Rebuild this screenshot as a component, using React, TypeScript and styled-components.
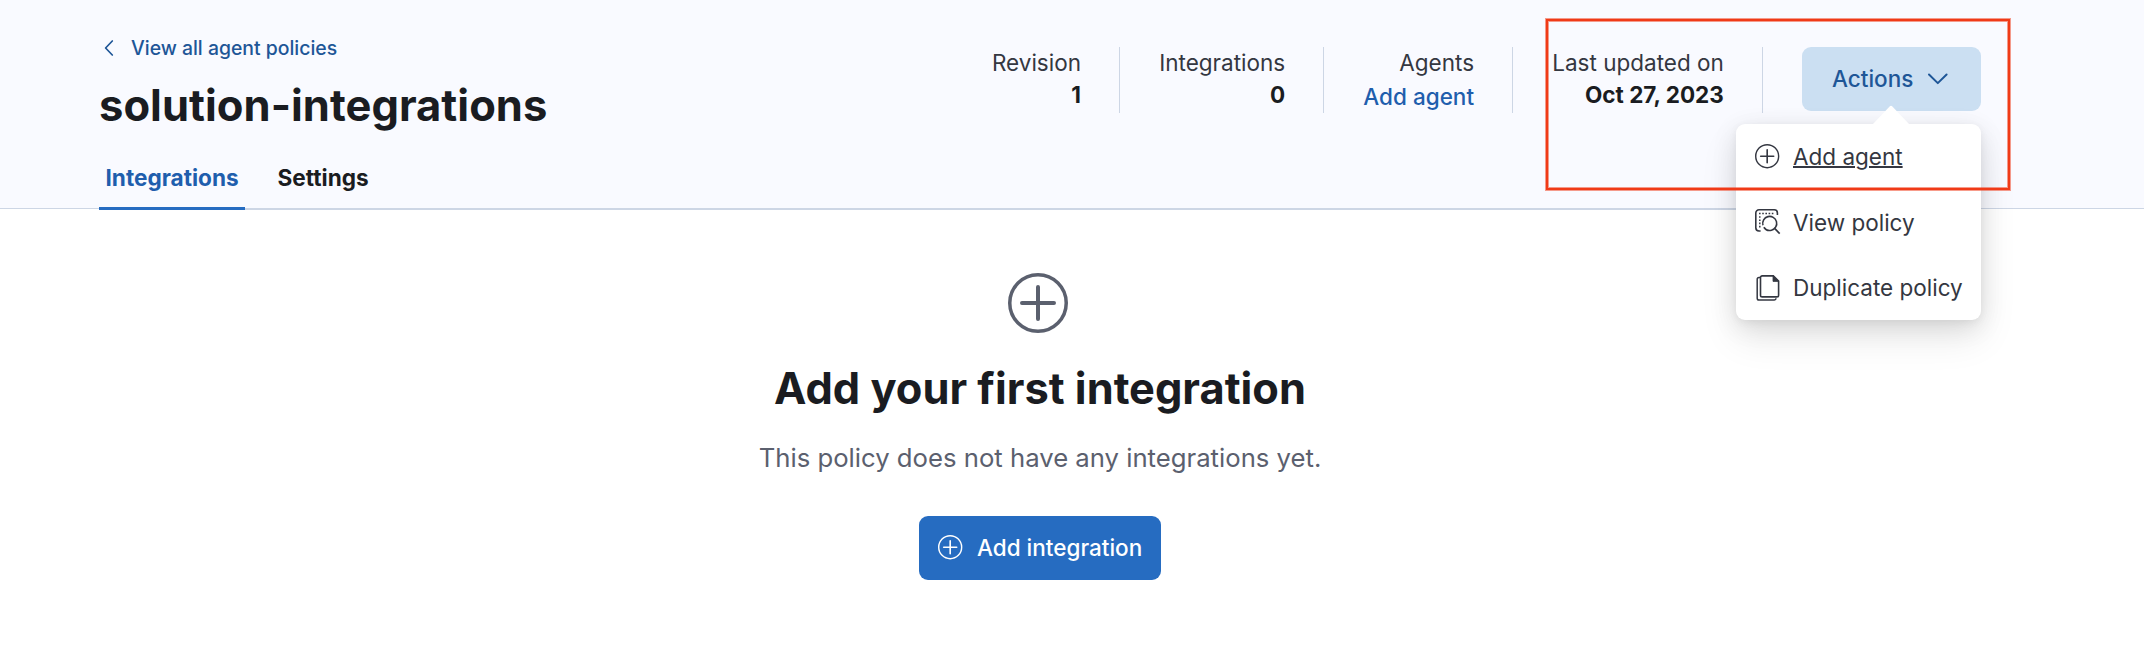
import React from 'react';
import styled, { createGlobalStyle } from 'styled-components';

const color = {
  primary: '#266cc1',
  primaryText: '#1f5ead',
  backText: '#1e5697',
  title: '#1a1c21',
  text: '#343741',
  subdued: '#5b606e',
  border: '#cdd6e5',
  headerBg: '#f9faff',
};

const GlobalStyle = createGlobalStyle`
  * { box-sizing: border-box; }
  body { margin: 0; background: #fff; overflow: hidden; }
`;

const Page = styled.div`
  position: relative;
  width: 2144px;
  height: 656px;
  font-family: Inter, 'Liberation Sans', sans-serif;
  font-size: 22.4px;
  color: ${color.text};
  background: #fff;
`;

const Header = styled.header`
  height: 209px;
  padding: 0 163px 0 99px;
  background: ${color.headerBg};
  border-bottom: 1px solid ${color.border};
  display: flex;
  flex-direction: column;
`;

const HeaderTop = styled.div`
  display: flex;
  flex: none;
  justify-content: space-between;
  align-items: flex-start;
  height: 147px;
`;

const TitleBlock = styled.div`
  padding-top: 34px;
`;

const BackLink = styled.a`
  display: flex;
  align-items: center;
  gap: 13px;
  height: 28px;
  padding-left: 1px;
  font-size: 19.4px;
  font-weight: 500;
  color: ${color.backText};
`;

const Title = styled.h1`
  margin: 17px 0 0;
  font-size: 43.5px;
  font-weight: 700;
  line-height: 52px;
  letter-spacing: 0.03px;
  color: ${color.title};
  white-space: nowrap;
`;

const Stats = styled.div`
  display: flex;
  padding-top: 47px;
`;

const Stat = styled.dl`
  margin: 0 39px 0 0;
  padding-right: 38.2px;
  height: 66px;
  border-right: 1px solid ${color.border};
  font-size: 22.5px;
  text-align: right;
  white-space: nowrap;
`;

const StatLabel = styled.dt`
  line-height: 32px;
`;

const StatValue = styled.dd<{ $link?: boolean }>`
  margin: ${(p) => (p.$link ? '2px' : '0')} 0 0;
  line-height: 32px;
  font-weight: ${(p) => (p.$link ? 500 : 700)};
  color: ${(p) => (p.$link ? color.primaryText : color.title)};
`;

const ActionsWrap = styled.div`
  position: relative;
`;

const ActionsButton = styled.button`
  display: flex;
  align-items: center;
  gap: 14px;
  width: 179px;
  height: 64px;
  padding: 0 0 1px 30px;
  border: 0;
  border-radius: 9px;
  background: #cbdff2;
  color: ${color.backText};
  font: 500 22.5px Inter, sans-serif;
`;

const Popover = styled.div`
  position: absolute;
  z-index: 2;
  top: 77px;
  right: 0;
  width: 245px;
  height: 196px;
  border-radius: 9px;
  background: #fff;
  box-shadow: 0 2px 8px rgba(0, 0, 0, 0.05), 0 6px 26px rgba(0, 0, 0, 0.1), 0 18px 38px rgba(0, 0, 0, 0.09);
`;

const Arrow = styled.svg`
  position: absolute;
  top: -19px;
  left: 136px;
`;

const MenuItem = styled.div<{ $active?: boolean }>`
  display: flex;
  align-items: center;
  gap: 12px;
  height: 65.5px;
  padding-left: 19px;
  font-size: 22.5px;
  white-space: nowrap;

  span {
    text-decoration: ${(p) => (p.$active ? 'underline' : 'none')};
    text-decoration-thickness: 2px;
  }
`;

const Tabs = styled.nav`
  display: flex;
  flex: none;
  gap: 26px;
  width: 1882px;
  height: 63px;
  box-shadow: inset 0 -2px ${color.border};
`;

const Tab = styled.a<{ $selected?: boolean }>`
  height: 63px;
  padding: 0 6.5px;
  width: ${(p) => (p.$selected ? '146px' : 'auto')};
  font-size: 22.6px;
  line-height: 62px;
  font-weight: 700;
  white-space: nowrap;
  color: ${(p) => (p.$selected ? color.primaryText : color.title)};
  border-bottom: ${(p) => (p.$selected ? `3px solid ${color.primary}` : '0')};
`;

const Empty = styled.main`
  display: flex;
  flex-direction: column;
  align-items: center;
  width: 2080px;
  padding-top: 64px;
  color: ${color.subdued};
`;

const EmptyTitle = styled.h2`
  margin: 25px 0 0;
  font-size: 43.4px;
  font-weight: 700;
  line-height: 52px;
  color: ${color.title};
`;

const EmptyText = styled.p`
  margin: 25px 0 0;
  font-size: 25.7px;
  line-height: 38px;
  color: ${color.subdued};
`;

const PrimaryButton = styled.button`
  display: flex;
  align-items: center;
  gap: 13px;
  width: 242px;
  height: 64px;
  margin-top: 39px;
  padding: 0 0 1px 19px;
  border: 0;
  border-radius: 9px;
  background: ${color.primary};
  color: #fff;
  font: 500 22.5px Inter, sans-serif;
  white-space: nowrap;
`;

const Highlight = styled.div`
  position: absolute;
  z-index: 3;
  left: 1546px;
  top: 19px;
  width: 464px;
  height: 171px;
  border: 2px solid #f03a17;
  box-shadow: 0 0 0 1px rgba(240, 58, 23, 0.5), inset 0 0 0 1px rgba(240, 58, 23, 0.5);
`;

const PlusInCircle = ({ size }: { size: number }) => (
  <svg width={size} height={size} viewBox="0 0 16 16" fill="none" stroke="currentColor">
    <circle cx="7.5" cy="7.5" r="7.06" strokeWidth="0.88" />
    <path d="M7.5 3.5v8M3.5 7.5h8" strokeWidth="1" strokeLinecap="round" />
  </svg>
);

const InspectIcon = () => (
  <svg width="26" height="26" viewBox="0 0 26 26" fill="none" stroke="currentColor">
    <path d="M5.6 22H4a3.2 3.2 0 0 1-3.2-3.2V4A3.2 3.2 0 0 1 4 .8h15.2A3.2 3.2 0 0 1 22.4 4v2" strokeWidth="1.6" />
    <path d="M4 4.4h15" strokeWidth="1.5" strokeDasharray="1.6 1.6" />
    <path d="M4.8 7.2v12" strokeWidth="1.5" strokeDasharray="1.6 1.6" />
    <circle cx="14.7" cy="14.4" r="7" strokeWidth="1.6" strokeDasharray="41.5 2.5" transform="rotate(165 14.7 14.4)" />
    <path d="M19.4 19.2l5.3 5.4" strokeWidth="1.7" />
  </svg>
);

const CopyIcon = () => (
  <svg width="26" height="26" viewBox="0 0 26 26" fill="none" stroke="currentColor">
    <path d="M5.4 2.4H4a1.8 1.8 0 0 0-1.8 1.8v19A1.8 1.8 0 0 0 4 25h15.3a1.8 1.8 0 0 0 1.7-1.8" strokeWidth="1.5" />
    <path d="M18.3.9H7.2a1.7 1.7 0 0 0-1.7 1.7v17.6a1.7 1.7 0 0 0 1.7 1.7h14.7a1.7 1.7 0 0 0 1.7-1.7V6z" strokeWidth="1.6" />
    <path d="M18 .8v5.6h5.8z" fill="currentColor" strokeWidth="0.8" />
  </svg>
);

export default function App() {
  return (
    <Page>
      <GlobalStyle />
      <Header>
        <HeaderTop>
          <TitleBlock>
            <BackLink>
              <svg width="18" height="18" viewBox="0 0 18 18" fill="none" stroke="currentColor" strokeWidth="1.7" strokeLinecap="round" strokeLinejoin="round">
                <path d="M12.3 2L5.6 9l6.7 7" />
              </svg>
              View all agent policies
            </BackLink>
            <Title>solution-integrations</Title>
          </TitleBlock>
          <Stats>
            <Stat>
              <StatLabel>Revision</StatLabel>
              <StatValue>1</StatValue>
            </Stat>
            <Stat>
              <StatLabel>Integrations</StatLabel>
              <StatValue>0</StatValue>
            </Stat>
            <Stat>
              <StatLabel>Agents</StatLabel>
              <StatValue $link>Add agent</StatValue>
            </Stat>
            <Stat>
              <StatLabel>Last updated on</StatLabel>
              <StatValue>Oct 27, 2023</StatValue>
            </Stat>
            <ActionsWrap>
              <ActionsButton>
                Actions
                <svg width="22" height="22" viewBox="0 0 22 22" fill="none" stroke="currentColor" strokeWidth="2" strokeLinecap="round" strokeLinejoin="round">
                  <path d="M2 6.5l8.8 8.6 8.8-8.6" />
                </svg>
              </ActionsButton>
              <Popover>
                <Arrow width="38" height="20" viewBox="0 0 38 20">
                  <path d="M0 20L17.6 1.6Q19 0 20.4 1.6L38 20z" fill="#fff" />
                </Arrow>
                <MenuItem $active>
                  <PlusInCircle size={26} />
                  <span>Add agent</span>
                </MenuItem>
                <MenuItem>
                  <InspectIcon />
                  <span>View policy</span>
                </MenuItem>
                <MenuItem>
                  <CopyIcon />
                  <span>Duplicate policy</span>
                </MenuItem>
              </Popover>
            </ActionsWrap>
          </Stats>
        </HeaderTop>
        <Tabs>
          <Tab $selected>Integrations</Tab>
          <Tab>Settings</Tab>
        </Tabs>
      </Header>
      <Empty>
        <PlusInCircle size={64} />
        <EmptyTitle>Add your first integration</EmptyTitle>
        <EmptyText>This policy does not have any integrations yet.</EmptyText>
        <PrimaryButton>
          <PlusInCircle size={26} />
          Add integration
        </PrimaryButton>
      </Empty>
      <Highlight />
    </Page>
  );
}
